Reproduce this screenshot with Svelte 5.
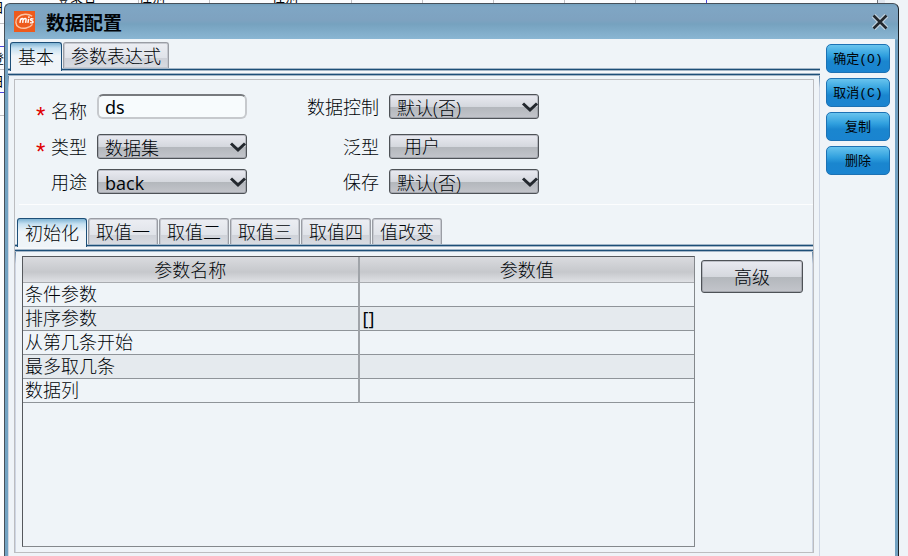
<script>
  let name = $state("ds");
  let type = $state("数据集");
  let usage = $state("back");
  let control = $state("默认(否)");
  let save = $state("默认(否)");
  let mainTab = $state("基本");
  let valueTab = $state("初始化");

  const mainTabs = ["基本", "参数表达式"];
  const valueTabs = ["初始化", "取值一", "取值二", "取值三", "取值四", "值改变"];
  const actions = ["确定(O)", "取消(C)", "复制", "删除"];

  let rows = $state([
    { name: "条件参数", value: "" },
    { name: "排序参数", value: "[]" },
    { name: "从第几条开始", value: "" },
    { name: "最多取几条", value: "" },
    { name: "数据列", value: "" }
  ]);
</script>

{#snippet arrow()}
  <svg class="arrow" viewBox="0 0 18 12" aria-hidden="true">
    <path d="M2 2.5 L9 9 L16 2.5" />
  </svg>
{/snippet}

<div class="page">
  <div class="sheet" aria-hidden="true">
    <div class="sheet-cols"></div>
    <span class="cell c1">登录名</span>
    <span class="cell c2">性别</span>
    <span class="cell c3">性别</span>
    <span class="cell r1">日</span>
    <span class="cell r2">登</span>
    <span class="cell r3">日</span>
    <div class="sheet-edge"></div>
  </div>

  <div class="dialog" role="dialog" aria-labelledby="title">
    <header class="titlebar">
      <svg class="logo" viewBox="0 0 22 22" aria-hidden="true">
        <rect width="22" height="22" fill="#ee5a1c" />
        <path d="M19 5.5 C15 2.5 8 2.8 4.6 6 C0.8 9.6 1.2 14.5 5 16.8 C9.5 19.4 16.5 18 19.3 14" fill="none" stroke="#fbc3a4" stroke-width="1.5" />
        <path d="M6.2 12.5 L7 8 M6.7 9.5 Q8.8 6.7 9.6 8.5 L9.1 12.5 M9.6 9.3 Q12 6.7 12.7 8.6 L12.2 12.5 M15.3 8.2 L14.6 12.5 M20.4 8.6 Q17.5 7.4 17.4 9 Q17.5 10 19.1 10.4 Q20.8 11.6 19.2 12.3 Q17.8 12.7 16.7 12.1" fill="none" stroke="#fff" stroke-width="1.5" />
        <circle cx="15.6" cy="6.4" r="0.9" fill="#fff" />
      </svg>
      <h1 id="title">数据配置</h1>
      <button class="close" aria-label="关闭">
        <svg viewBox="0 0 16 16" aria-hidden="true">
          <path class="halo" d="M1.5 1.5 L14.5 14.5 M14.5 1.5 L1.5 14.5" />
          <path class="cross" d="M1.5 1.5 L14.5 14.5 M14.5 1.5 L1.5 14.5" />
        </svg>
      </button>
    </header>

    <div class="body">
      <main class="main">
        <div class="tabs" role="tablist">
          {#each mainTabs as tab}
            <button class="tab" class:active={mainTab === tab} role="tab" aria-selected={mainTab === tab} onclick={() => (mainTab = tab)}>{tab}</button>
          {/each}
        </div>

        <div class="pane">
          <div class="group">
            <form class="form">
              <label class="name-label" for="name"><span class="star">*</span>名称</label>
              <input id="name" type="text" bind:value={name} />
              <label for="control">数据控制</label>
              <div class="combo">
                <select id="control" bind:value={control}>
                  <option>默认(否)</option>
                  <option>是</option>
                </select>
                {@render arrow()}
              </div>

              <label for="type"><span class="star">*</span>类型</label>
              <div class="combo">
                <select id="type" bind:value={type}>
                  <option>数据集</option>
                </select>
                {@render arrow()}
              </div>
              <label for="generic">泛型</label>
              <button id="generic" class="field-button" type="button">用户</button>

              <label for="usage">用途</label>
              <div class="combo">
                <select id="usage" bind:value={usage}>
                  <option>back</option>
                </select>
                {@render arrow()}
              </div>
              <label for="save">保存</label>
              <div class="combo">
                <select id="save" bind:value={save}>
                  <option>默认(否)</option>
                  <option>是</option>
                </select>
                {@render arrow()}
              </div>
            </form>

            <div class="divider"></div>

            <div class="tabs inner" role="tablist">
              {#each valueTabs as tab}
                <button class="tab" class:active={valueTab === tab} role="tab" aria-selected={valueTab === tab} onclick={() => (valueTab = tab)}>{tab}</button>
              {/each}
            </div>

            <div class="pane inner-pane">
              <div class="grid-box">
                <table>
                  <thead>
                    <tr><th>参数名称</th><th>参数值</th></tr>
                  </thead>
                  <tbody>
                    {#each rows as row}
                      <tr><td>{row.name}</td><td>{row.value}</td></tr>
                    {/each}
                  </tbody>
                </table>
              </div>
              <button class="advanced">高级</button>
            </div>
          </div>
        </div>
      </main>

      <aside class="side">
        {#each actions as action}
          <button class="action">{action}</button>
        {/each}
      </aside>
    </div>
  </div>
</div>

<style>
  :global(body) {
    margin: 0;
    background: #eff4f8;
  }

  .page {
    position: relative;
    min-height: 100vh;
    box-sizing: border-box;
    padding: 3px 9px 0 4px;
    overflow: hidden;
    font-family: "Noto Sans", "Noto Sans CJK SC", sans-serif;
    font-size: 18px;
    font-weight: 300;
    line-height: 24px;
    color: #000408;
  }

  button, input, select {
    font: inherit;
    color: inherit;
    margin: 0;
    box-sizing: border-box;
  }

  /* Sheet behind the dialog */
  .sheet {
    position: absolute;
    inset: 0 23px 0 0;
    overflow: hidden;
    background:
      linear-gradient(#c0c0c4, #c0c0c4) 0 23px / 100% 1px no-repeat,
      linear-gradient(#4a46dc, #4a46dc) 0 46px / 100% 1px no-repeat,
      linear-gradient(#c0c0c4, #c0c0c4) 0 69px / 100% 1px no-repeat,
      linear-gradient(#4a46dc, #4a46dc) 0 92px / 100% 1px no-repeat,
      linear-gradient(#c0c0c4, #c0c0c4) 0 115px / 100% 1px no-repeat,
      #fbfcfe;
    font-size: 13px;
    line-height: 14px;
    font-weight: 400;
  }

  .sheet-cols {
    position: absolute;
    inset: 0 178px auto 138px;
    height: 3px;
    border-right: 1px solid #4a46dc;
    background: repeating-linear-gradient(to right, #c0c0c4 0 1px, transparent 1px 71px);
  }

  .sheet-edge {
    position: absolute;
    inset: 0 0 0 auto;
    width: 7px;
    border-left: 1px solid #70747a;
    background: #dfe5ee;
  }

  .cell { position: absolute; white-space: nowrap; }
  .c1 { left: 57px; top: -10px; }
  .c2 { left: 139px; top: -10px; }
  .c3 { left: 272px; top: -10px; }
  .r1 { left: -9px; top: 0; }
  .r2 { left: -9px; top: 51px; }
  .r3 { left: -9px; top: 74px; }

  /* Dialog */
  .dialog {
    position: relative;
    display: flex;
    flex-direction: column;
    min-height: calc(100vh - 3px);
    box-sizing: border-box;
    padding: 0 3px;
    border: solid #46505a;
    border-width: 1px 1px 0;
    border-right-color: #1c2228;
    border-radius: 6px 6px 0 0;
    background: linear-gradient(#72a0be, #7fa6c4 3px, #7ea2c0 16px, #76a2bf 20px, #8ab6d3 35px, #72a2c2 36px);
  }

  .titlebar {
    display: flex;
    align-items: center;
    height: 35px;
    padding: 0 7px 0 6px;
  }

  .logo {
    width: 21px;
    height: 21px;
  }

  h1 {
    flex: 1;
    margin: 0 0 0 11px;
    padding-top: 3px;
    font-size: 19px;
    font-weight: 700;
    line-height: 24px;
  }

  .close {
    width: 16px;
    height: 16px;
    padding: 0;
    border: 0;
    background: none;
  }

  .close svg { display: block; }
  .halo { stroke: #c3d3df; stroke-width: 5; }
  .cross { stroke: #23282e; stroke-width: 2.6; }

  .body {
    flex: 1;
    display: flex;
    background: #eff4f8;
  }

  .main {
    flex: 1;
    display: flex;
    flex-direction: column;
    min-width: 0;
    padding-top: 3px;
  }

  /* Tabs */
  .tabs {
    display: flex;
    gap: 1px;
    padding-left: 2px;
    height: 26px;
  }

  .tab {
    height: 26px;
    padding: 0 7px;
    border: 1px solid #9a9da4;
    border-bottom: 0;
    border-radius: 3px 3px 0 0;
    background: linear-gradient(#eceef3, #e0e3e9 60%, #cfd2d9 62%, #d9dce2);
    box-shadow: inset 0 0 0 1px #c6c9d0;
    line-height: 26px;
    white-space: nowrap;
  }

  .tab.active {
    position: relative;
    height: 29px;
    border-color: #1d4f78;
    background: linear-gradient(#7eb3d3, #c5e0f1 5px, #eff4f8 13px);
    box-shadow: none;
  }

  .pane {
    flex: 1;
    display: flex;
    padding: 11px 6px 3px;
    background:
      linear-gradient(#a3b6c8 1px, #1d4f78 1px 2px, #a3b6c8 2px 3px, #f4f7fa 3px 5px, #a3b6c8 5px 6px, #1d4f78 6px 7px, #a3b6c8 7px 8px, transparent 8px) 0 0 / 100% 8px no-repeat,
      linear-gradient(#1d4f78, #ced6e4 20px) 0 0 / 1px 100% no-repeat,
      linear-gradient(#1d4f78, #ced6e4 20px) 100% 0 / 1px 100% no-repeat;
  }

  .group {
    flex: 1;
    display: flex;
    flex-direction: column;
    min-width: 0;
    border: 1px solid #bcbdc0;
  }

  .form {
    display: grid;
    grid-template-columns: 72px 150px 122px 150px;
    grid-template-rows: 30px 25px 25px;
    gap: 10px;
    padding-top: 14px;
    line-height: 26px;
  }

  label { text-align: right; white-space: nowrap; }
  .name-label { padding-top: 4px; }

  .star {
    margin-right: 3px;
    color: #e00000;
    font-family: "Liberation Mono", monospace;
    font-size: 24px;
    font-weight: 400;
    line-height: 1px;
    vertical-align: -7px;
  }

  input {
    width: 100%;
    height: 25px;
    padding: 0 6px;
    border: 2px solid #c6c9cd;
    border-top-color: #777a7e;
    border-radius: 6px;
    background: #f7fbfd;
    font-weight: 400;
  }

  .combo {
    position: relative;
    height: 25px;
  }

  select, .field-button, .advanced {
    border: 1px solid #4e5257;
    border-radius: 3px;
    background: linear-gradient(#e9eaf1, #d5d8de 50%, #b3b7bc 52%, #c3c5cb);
    box-shadow: inset 0 0 0 1px rgba(110, 115, 122, 0.35);
  }

  select {
    display: block;
    width: 100%;
    height: 25px;
    padding: 0 20px 0 7px;
    appearance: none;
    font-family: "Open Sans", "Noto Sans CJK SC", sans-serif;
  }

  #usage { font-weight: 400; }

  .arrow {
    position: absolute;
    right: 0;
    top: 7px;
    width: 18px;
    height: 12px;
    pointer-events: none;
  }

  .arrow path {
    fill: none;
    stroke: #23282e;
    stroke-width: 3;
  }

  .field-button {
    height: 25px;
    padding: 0 14px;
    text-align: left;
    line-height: 23px;
  }

  .divider {
    height: 1px;
    margin: 10px 0 13px 4px;
    background: #fcfdfe;
  }

  .inner .tab { height: 27px; line-height: 27px; }
  .inner .tab.active { height: 29px; }

  .inner-pane {
    gap: 6px;
    padding: 12px 10px 5px 7px;
    align-items: flex-start;
  }

  /* Parameter table */
  .grid-box {
    flex: 1;
    align-self: stretch;
    border: 1px solid #84888c;
    border-top-color: #55585c;
    border-left-color: #55585c;
  }

  table {
    width: 100%;
    table-layout: fixed;
    border-collapse: collapse;
  }

  th, td {
    height: 23px;
    padding: 0 2px;
    border-bottom: 1px solid #8f9499;
    line-height: 23px;
    font-weight: 300;
  }

  th {
    height: 24px;
    padding-top: 1px;
    border-bottom-color: #a9acb0;
    background: linear-gradient(#dadbdf, #c6c8cc 60%, #dfe1e5);
  }

  th + th, td + td { border-left: 2px solid #a0a4a9; }
  td + td { padding-left: 3px; font-weight: 400; }
  tbody tr:nth-child(even) { background: #e5eaee; }

  .advanced {
    width: 102px;
    height: 33px;
    margin-top: 4px;
    padding: 0;
  }

  /* Action buttons */
  .side {
    display: flex;
    flex-direction: column;
    gap: 5px;
    width: 64px;
    padding: 5px 5px 0 6px;
  }

  .action {
    height: 29px;
    padding: 2px 0 0;
    border: 1px solid #1c72b4;
    border-radius: 5px;
    background: linear-gradient(#68c4ee, #2f9fde 40%, #1a86cf 60%, #1a84d0);
    font-family: "Liberation Mono", "Noto Sans CJK SC", monospace;
    font-size: 13px;
    font-weight: 400;
    white-space: nowrap;
  }
</style>
